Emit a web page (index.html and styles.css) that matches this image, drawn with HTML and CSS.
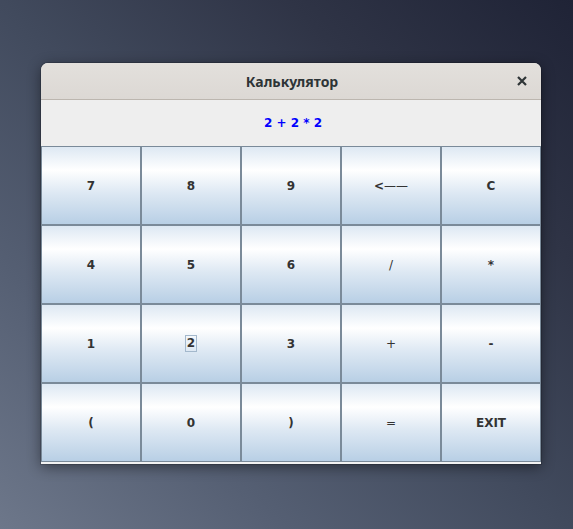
FILE: index.html
```html
<!DOCTYPE html>
<html>
<head>
<meta charset="utf-8">
<link rel="stylesheet" href="styles.css">
</head>
<body>
<div class="window">
  <div class="titlebar">
    <span class="title">Калькулятор</span>
    <span class="close"><svg width="10" height="10" viewBox="0 0 10 10"><path d="M1 1L9 9M9 1L1 9" stroke="#2e3436" stroke-width="2.2" stroke-linecap="butt"/></svg></span>
  </div>
  <div class="display">2 + 2 * 2</div>
  <div class="keys">
    <div class="key">7</div>
    <div class="key">8</div>
    <div class="key">9</div>
    <div class="key"><b class="lt">&lt;</b><span class="op">——</span></div>
    <div class="key">C</div>
    <div class="key">4</div>
    <div class="key">5</div>
    <div class="key">6</div>
    <div class="key"><span class="op">/</span></div>
    <div class="key">*</div>
    <div class="key">1</div>
    <div class="key"><span class="focus">2</span></div>
    <div class="key">3</div>
    <div class="key"><span class="op">+</span></div>
    <div class="key">-</div>
    <div class="key">(</div>
    <div class="key">0</div>
    <div class="key">)</div>
    <div class="key"><span class="op">=</span></div>
    <div class="key">EXIT</div>
  </div>
</div>
</body>
</html>
```

FILE: styles.css
```css
html, body {
  margin: 0;
  padding: 0;
}
body {
  width: 573px;
  height: 529px;
  overflow: hidden;
  background: linear-gradient(to top right, #6d778a 0%, #555f73 25%, #414a5d 50%, #2f3446 75%, #1f2336 100%);
  padding-top: 63px;
  padding-left: 41px;
  box-sizing: border-box;
}
.window {
  width: 500px;
  border-radius: 7px 7px 0 0;
  background: #f2f2f2;
  box-shadow: 0 3px 14px rgba(0, 0, 0, 0.45), 0 0 0 1px rgba(0, 0, 0, 0.15);
  padding-bottom: 2px;
}
.titlebar {
  height: 36px;
  border-radius: 7px 7px 0 0;
  background: linear-gradient(#e3e0dc, #dcd8d4);
  border-bottom: 1px solid #bcb6af;
  display: flex;
  align-items: center;
  justify-content: center;
  position: relative;
}
.title {
  font-family: "Noto Sans", "DejaVu Sans", sans-serif;
  font-weight: bold;
  font-size: 14px;
  color: #2e3436;
  padding-left: 2px;
}
.close {
  position: absolute;
  right: 14px;
  top: 13px;
  width: 10px;
  height: 10px;
  display: flex;
}
.display {
  height: 46px;
  background: #eeeeee;
  display: flex;
  align-items: center;
  justify-content: center;
  font-family: "DejaVu Sans", sans-serif;
  font-weight: bold;
  font-size: 12px;
  color: #0000ff;
  padding-left: 4px;
  box-sizing: border-box;
}
.keys {
  display: grid;
  grid-template-columns: repeat(5, 100px);
  grid-auto-rows: 79px;
}
.key {
  border: 1px solid #7a8a99;
  background: linear-gradient(#dde8f3 0%, #ffffff 30%, #dde8f3 60%, #b8cfe5 100%);
  display: flex;
  align-items: center;
  justify-content: center;
  font-family: "DejaVu Sans", sans-serif;
  font-weight: bold;
  font-size: 12px;
  color: #333333;
}
.op {
  font-weight: normal;
}
.lt {
  font-weight: bold;
}
.focus {
  outline: 1px solid #a3b8cc;
  padding: 0 1px;
  line-height: 15px;
}
```
